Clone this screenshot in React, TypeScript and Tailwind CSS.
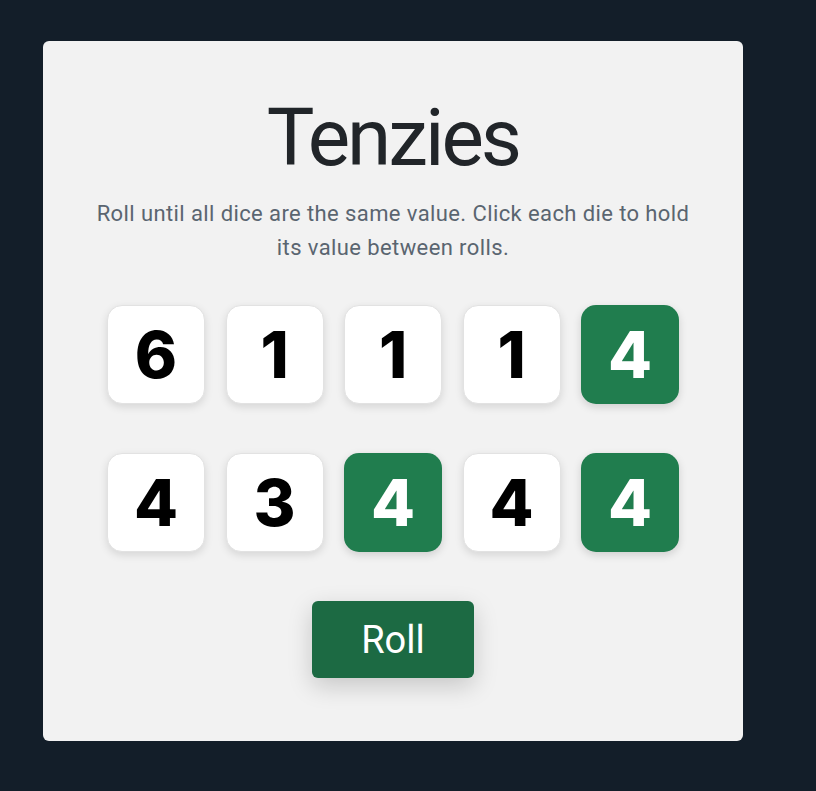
import { useState } from "react";

type Die = { id: number; value: number; held: boolean };

const initialDice: Die[] = [
    { id: 1, value: 6, held: false },
    { id: 2, value: 1, held: false },
    { id: 3, value: 1, held: false },
    { id: 4, value: 1, held: false },
    { id: 5, value: 4, held: true },
    { id: 6, value: 4, held: false },
    { id: 7, value: 3, held: false },
    { id: 8, value: 4, held: true },
    { id: 9, value: 4, held: false },
    { id: 10, value: 4, held: true },
];

export default function App() {
    const [dice, setDice] = useState<Die[]>(initialDice);

    const holdDie = (id: number) => {
        setDice((prev) =>
            prev.map((d) => (d.id === id ? { ...d, held: !d.held } : d))
        );
    };

    const rollDice = () => {
        setDice((prev) =>
            prev.map((d) =>
                d.held ? d : { ...d, value: Math.ceil(Math.random() * 6) }
            )
        );
    };

    return (
        <div className="min-h-[791px] bg-[#131e29] pt-[41px] pl-[43px] font-['Roboto',sans-serif]">
            <main className="w-[700px] h-[700px] bg-[#f2f2f2] rounded-[6px] flex flex-col items-center">
                <h1 className="mt-[57px] text-[80px] leading-none font-normal text-[#212529] tracking-[-3px]">
                    Tenzies
                </h1>
                <p className="mt-[19px] w-[610px] text-center text-[22px] leading-[34px] tracking-[0.4px] text-[#5a6570]">
                    Roll until all dice are the same value. Click each die to
                    hold its value between rolls.
                </p>

                <div className="mt-[40px] grid grid-cols-5 gap-x-[20.5px] gap-y-[49px] font-['Inter',sans-serif]">
                    {dice.map((die) => (
                        <button
                            key={die.id}
                            onClick={() => holdDie(die.id)}
                            className={
                                die.held
                                    ? "w-[98px] h-[99px] rounded-[15px] bg-[#207d4e] text-white text-[64px] font-extrabold leading-none flex items-center justify-center shadow-[0_3px_8px_rgba(0,0,0,0.15)]"
                                    : "w-[98px] h-[99px] rounded-[15px] bg-white border border-[#e2e2e2] text-black text-[64px] font-extrabold leading-none flex items-center justify-center shadow-[0_3px_8px_rgba(0,0,0,0.12)]"
                            }
                        >
                            {die.value}
                        </button>
                    ))}
                </div>

                <button
                    onClick={rollDice}
                    className="mt-[49px] w-[162px] h-[77px] rounded-[6px] bg-[#1c6a43] text-white text-[38px] leading-none flex items-center justify-center shadow-[0_8px_24px_rgba(0,0,0,0.18)]"
                >
                    Roll
                </button>
            </main>
        </div>
    );
}
